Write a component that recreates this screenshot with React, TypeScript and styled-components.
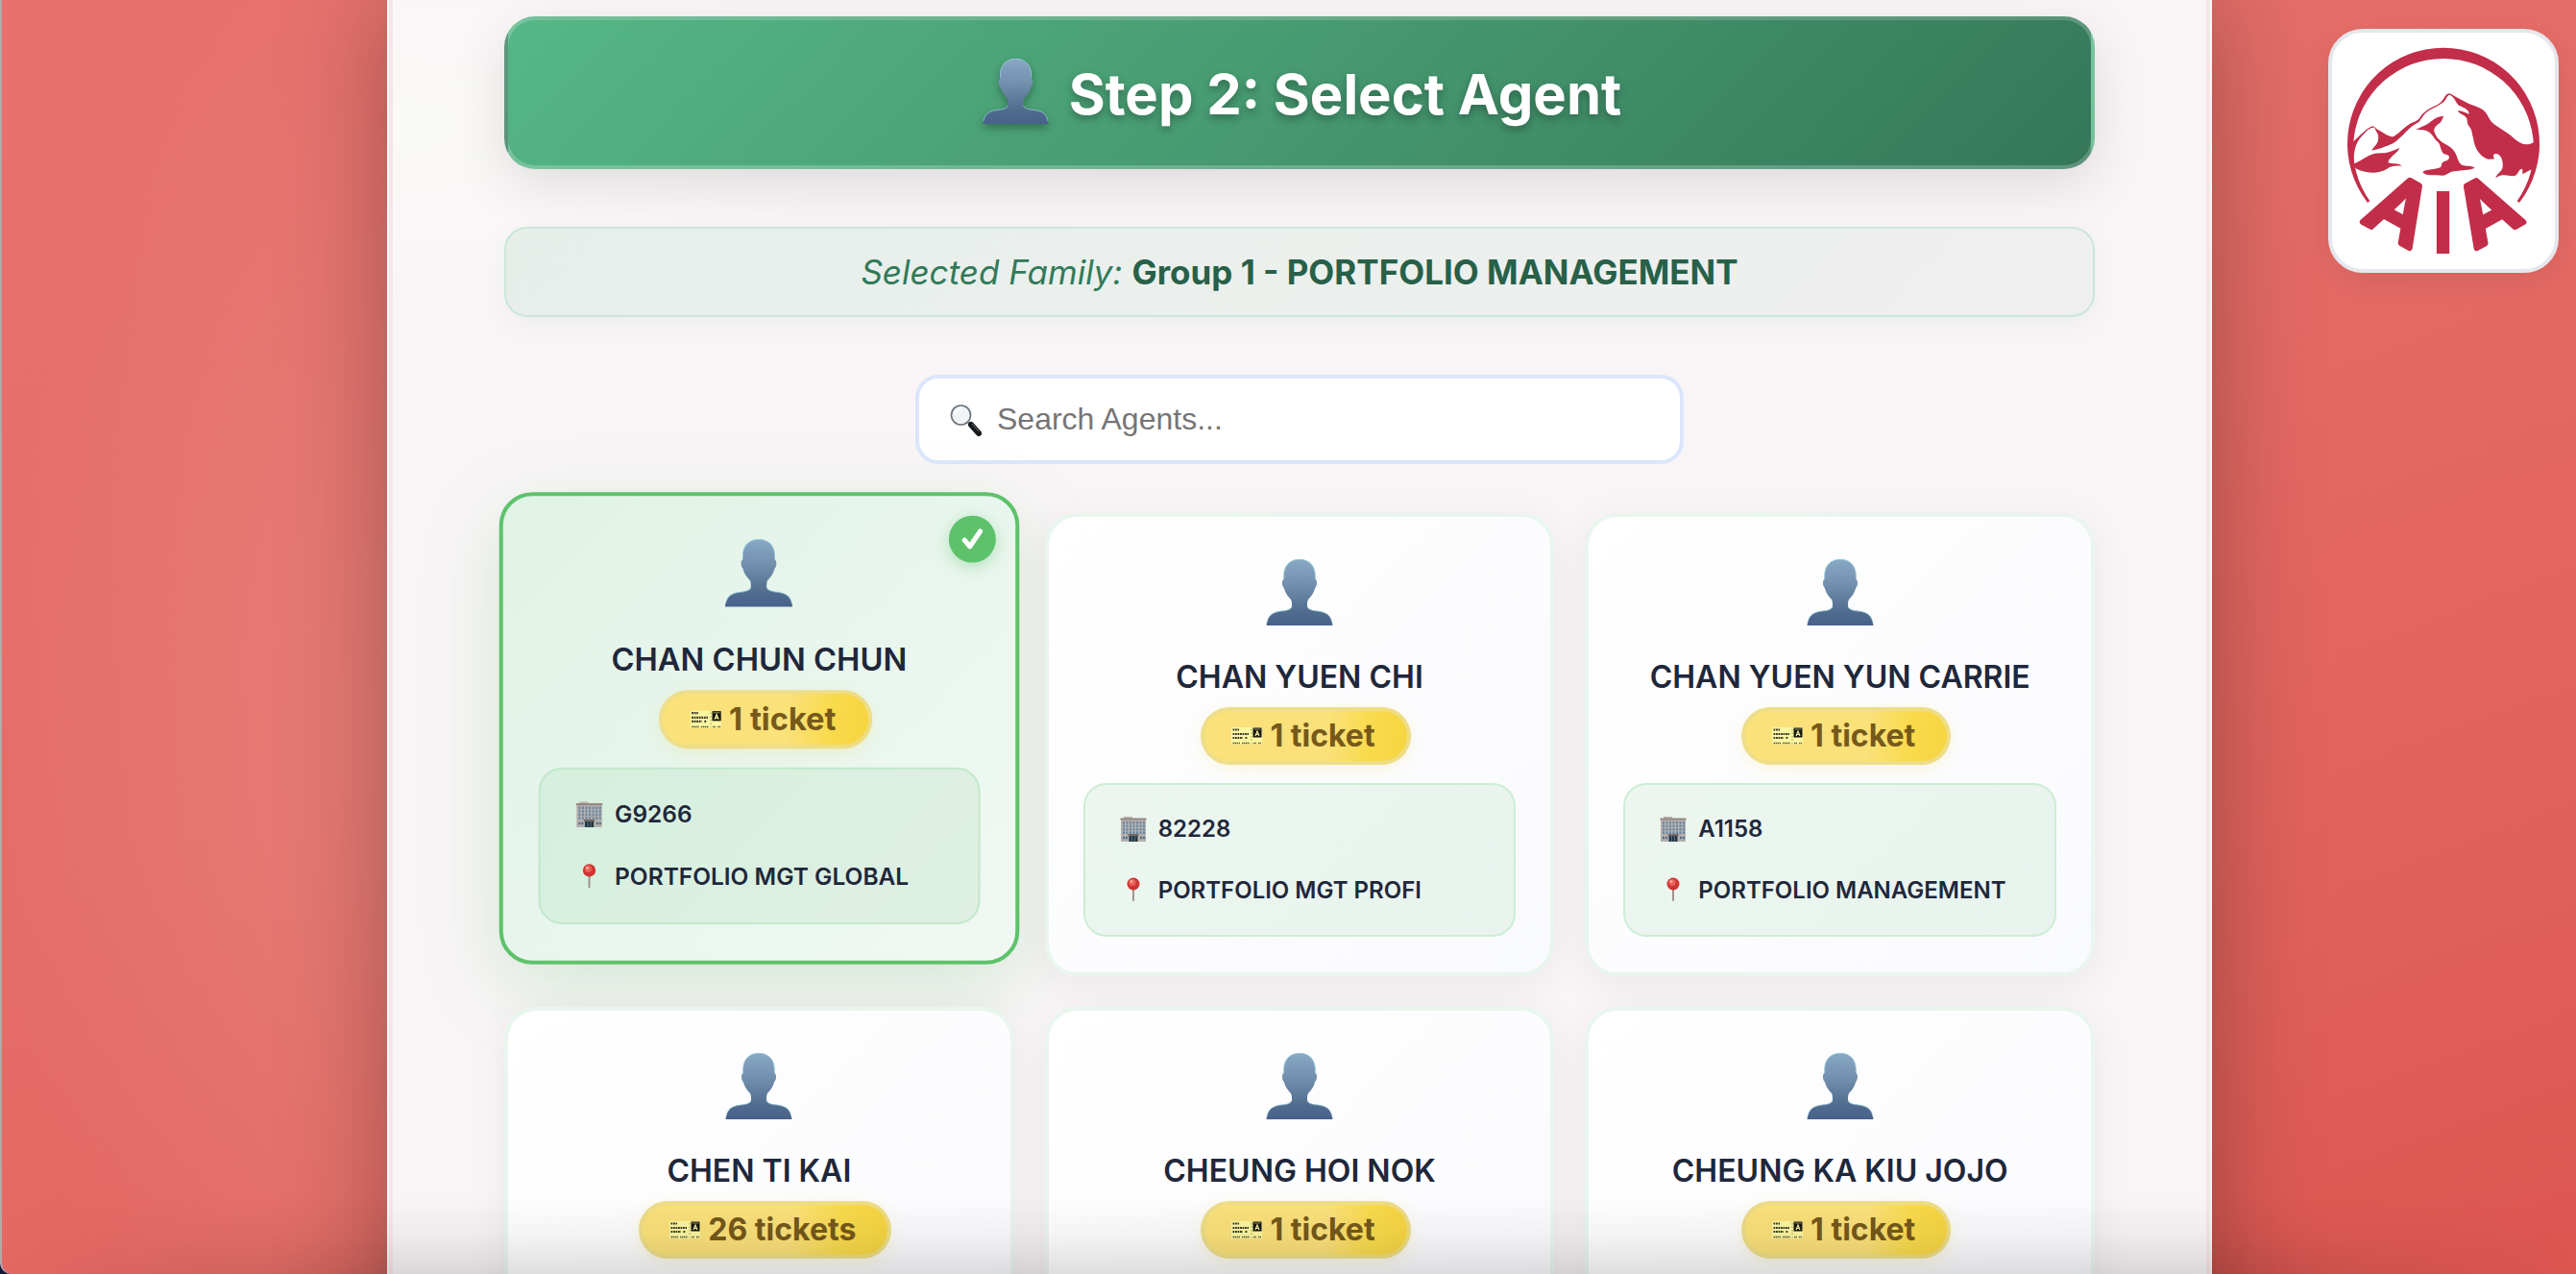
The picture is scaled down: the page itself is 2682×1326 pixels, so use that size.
import React, { useState } from "react";
import styled, { createGlobalStyle, css } from "styled-components";

const GlobalStyle = createGlobalStyle`
  * { box-sizing: border-box; }
  body {
    margin: 0;
    background: #14183a;
    font-family: Inter, "Liberation Sans", sans-serif;
    color: #1f273a;
  }
  button { font: inherit; color: inherit; }
`;

const Page = styled.div`
  height: 100vh;
  overflow: hidden;
  display: flex;
  justify-content: center;
  align-items: flex-start;
  padding-left: 22px;
  border-left: 2px solid #b3a9a9;
  border-bottom-left-radius: 12px;
  background:
    radial-gradient(ellipse 440px 900px at 440px 780px, rgba(232, 136, 130, 0.6), transparent),
    linear-gradient(160deg, #e8716d 0%, #e56d68 42%, #e46862 58%, #df6059 82%, #dc5650 100%);
`;

const BottomShade = styled.div`
  position: fixed;
  left: 0;
  right: 0;
  bottom: 0;
  height: 80px;
  pointer-events: none;
  background: linear-gradient(90deg, transparent 0, #000 400px, #000 calc(100% - 400px), transparent 100%);
  mask-image: linear-gradient(to bottom, transparent, rgba(0, 0, 0, 0.04) 50%, rgba(0, 0, 0, 0.12));
`;

const LogoCard = styled.a`
  position: fixed;
  top: 30px;
  right: 18px;
  width: 240px;
  height: 254px;
  border: 4px solid #e5e7ec;
  border-radius: 36px;
  background: #fff;
  box-shadow: 0 8px 32px rgba(0, 0, 0, 0.08);

  svg { display: block; width: 100%; height: 100%; overflow: visible; }
`;

const Panel = styled.main`
  width: 100%;
  max-width: 1900px;
  min-height: 100vh;
  padding: 17px 120px 0;
  display: flex;
  flex-direction: column;
  border: 0 solid #fdf7f7;
  border-width: 0 2px;
  background:
    radial-gradient(ellipse 500px 200px at 0 130px, rgba(250, 250, 247, 0.9), transparent),
    #f9f5f7;
  box-shadow: inset 4px 0 0 #f7e6e8, inset -4px 0 0 #f7e6e8, 0 0 100px rgba(40, 20, 20, 0.36);
`;

const Banner = styled.h1`
  margin: 0 0 60px;
  padding: 40px;
  display: flex;
  justify-content: center;
  align-items: center;
  gap: 16px;
  border: 4px solid rgba(255, 255, 255, 0.2);
  border-radius: 32px;
  background: linear-gradient(135deg, #55b786 0%, #469970 50%, #357759 100%);
  box-shadow: 0 16px 56px rgba(0, 0, 0, 0.11);
  color: #fff;
  font-size: 58px;
  font-weight: 700;
  line-height: 71px;
  text-shadow: 0 4px 8px rgba(0, 0, 0, 0.3);

  svg { filter: drop-shadow(0 4px 4px rgba(0, 0, 0, 0.3)); margin: -12px 0 -4px; }
  span { padding-top: 2px; margin-bottom: -2px; }
`;

const Family = styled.p`
  margin: 0 0 60px;
  padding: 24px;
  border: 2px solid #cbe6da;
  border-radius: 24px;
  background: linear-gradient(135deg, #e7eeea, #ebf0ed 50%, #efefef);
  box-shadow: 0 8px 24px rgba(56, 120, 90, 0.06);
  color: #317a5a;
  font-size: 35px;
  font-style: italic;
  line-height: 42px;
  text-align: center;

  strong { color: #286048; font-style: normal; font-weight: 700; }
`;

const SearchBox = styled.label`
  align-self: center;
  width: 100%;
  max-width: 800px;
  margin-bottom: 51px;
  padding: 24px 32px;
  display: flex;
  align-items: center;
  gap: 16px;
  border: 4px solid #dbe6fc;
  border-radius: 24px;
  background: #fff;

  input {
    flex: 1;
    min-width: 0;
    padding: 0;
    border: 0;
    outline: 0;
    background: transparent;
    font-family: "Liberation Sans", Arial, sans-serif;
    font-size: 32px;
    line-height: 37px;
    height: 37px;
    color: #1f273a;
  }
  input::placeholder { color: #757575; opacity: 1; }
`;

const Grid = styled.div`
  display: grid;
  grid-template-columns: repeat(3, minmax(0, 1fr));
  gap: 32px;
`;

const AgentName = styled.span`
  margin: 31px 0 11px;
  font-size: 32px;
  font-weight: 600;
  line-height: 40px;
  white-space: nowrap;
`;

const Info = styled.span`
  align-self: stretch;
  height: 160px;
  margin-top: 19px;
  padding: 26px 36px;
  display: flex;
  flex-direction: column;
  gap: 24px;
  border: 2px solid #cdedd4;
  border-radius: 24px;
  background: rgba(92, 190, 110, 0.1);
`;

const Card = styled.button<{ $selected: boolean }>`
  position: relative;
  min-height: 482px;
  padding: 36px;
  display: flex;
  flex-direction: column;
  align-items: center;
  justify-content: flex-start;
  border: 4px solid #e9f6ee;
  border-radius: 34px;
  background: linear-gradient(135deg, #ffffff, #f9fafd);
  box-shadow: 0 8px 40px rgba(0, 0, 0, 0.06);
  cursor: pointer;

  ${(p) =>
    p.$selected &&
    css`
      transform: translateY(-17px) scale(1.02);
      border-color: #5ec26b;
      background: linear-gradient(135deg, #e0f3e6, #e9f6ee 55%, #f1f8f4);
      box-shadow: 0 24px 80px rgba(72, 180, 90, 0.2);

      ${Info} { background: rgba(92, 194, 120, 0.11); border-color: #c3e8cb; }
    `}
`;

const Badge = styled.span`
  position: absolute;
  top: 20px;
  right: 20px;
  width: 48px;
  height: 48px;
  display: grid;
  place-items: center;
  border-radius: 50%;
  background: #5ec26b;
  box-shadow: 0 4px 16px rgba(94, 194, 107, 0.4);
`;

const Tickets = styled.span`
  height: 60px;
  margin-left: 13px;
  padding: 0 33px 0 28px;
  display: flex;
  align-items: center;
  gap: 8px;
  border: 4px solid rgba(236, 222, 140, 0.9);
  border-radius: 30px;
  background: linear-gradient(95deg, #fae17a 0%, #fae17a 60%, #f9da4c 80%, #f6d440 100%) border-box;
  box-shadow: 0 4px 16px rgba(246, 213, 64, 0.18);
  color: #76591a;
  font-size: 32px;
  font-weight: 700;
  line-height: 40px;
  white-space: nowrap;
`;

const InfoRow = styled.span`
  height: 40px;
  display: flex;
  align-items: center;
  gap: 12px;
  font-size: 24px;
  font-weight: 600;
  line-height: 40px;
  white-space: nowrap;
`;

function Person({ size }: { size: number }) {
  return (
    <svg width={size} height={size} viewBox="0 0 80 80" aria-hidden="true">
      <defs>
        <linearGradient id="bust" x1="0" y1="0" x2="0" y2="1">
          <stop offset="0" stopColor="#88a8c4" />
          <stop offset="0.35" stopColor="#7592b0" />
          <stop offset="0.8" stopColor="#506b8d" />
          <stop offset="1" stopColor="#48618a" />
        </linearGradient>
      </defs>
      <path
        d="M40 8C30 8 23.500 15 23.500 25V29C21.200 30 21.600 36 23.800 38C25 43 28 47 31 50C32 52 32 54 32 57C31 60 28 61 24 61.500C12 62.500 7 66 5.500 77H74.500C73 66 68 62.500 56 61.500C52 61 49 60 48 57C48 54 48 52 49 50C52 47 55 43 56.200 38C58.400 36 58.800 30 56.500 29V25C56.500 15 50 8 40 8Z"
        fill="url(#bust)"
      />
      <path
        d="M23.800 28V24.500C23.800 15 30 8.300 40 8.300S56.200 15 56.200 24.500V28M6 74C8 65 13 62.800 24 61.800C28 61.300 31 60 32 57.500M74 74C72 65 67 62.800 56 61.800C52 61.300 49 60 48 57.500"
        fill="none"
        stroke="#98d0e0"
        strokeOpacity="0.75"
      />
    </svg>
  );
}

function Magnifier() {
  return (
    <svg width="33" height="34" viewBox="0 0 33 34" aria-hidden="true">
      <circle cx="11.500" cy="12" r="10" fill="#f0f4f5" stroke="#66717b" strokeWidth="1.600" />
      <path d="M5 12a7 7 0 0 1 6-7" fill="none" stroke="#fff" strokeWidth="2" />
      <path d="M18.500 19l4 4" stroke="#8c949c" strokeWidth="2.500" />
      <path d="M22 22l8 9" stroke="#17191d" strokeWidth="6" strokeLinecap="round" />
      <path d="M23 21l7 8" stroke="#69717a" strokeWidth="1" />
    </svg>
  );
}

function Ticket() {
  return (
    <svg width="32" height="20" viewBox="0 0 32 20" aria-hidden="true">
      <path d="M0 1H20L21 2L22 1H32V19H22L21 18L20 19H0Z" fill="#fbf6a0" />
      <path d="M21 3V18" stroke="#8b8448" strokeWidth="0.800" strokeDasharray="1.500 2" />
      <path d="M1.500 3.500H8M1.500 8H18M1.500 12H12M14.500 12H17" stroke="#38382a" strokeWidth="2.200" strokeDasharray="1.800 0.700" />
      <path d="M1.500 17.500H9M11 17.500H19M23 17.500H26M28 17.500H31" stroke="#5b5a3c" strokeWidth="1.400" strokeDasharray="1.500 0.500" />
      <rect x="22.500" y="1.500" width="9" height="10" fill="#17170f" />
      <path d="M23.500 3H30.500" stroke="#8d8a58" />
      <path d="M25 10L27 5L29 10M25.500 8.500H28.500" fill="none" stroke="#f5f0a0" strokeWidth="1.200" />
    </svg>
  );
}

function Building() {
  return (
    <svg width="28" height="28" viewBox="0 0 28 28" aria-hidden="true">
      <rect x="4" y="1" width="9" height="3" fill="#b9b2ae" />
      <rect x="1" y="3" width="26" height="24" fill="#b4b0ae" />
      <rect x="0.500" y="2.500" width="27" height="2" fill="#958783" />
      <path d="M4 6V20M7.500 6V20M11 6V20M14.500 6V20M18 6V20M21.500 6V20M25 6V20" stroke="#6788a3" strokeWidth="2" strokeDasharray="2.500 1" />
      <path d="M3 23H8M21 23H26" stroke="#526c82" strokeWidth="2.500" strokeDasharray="2 1" />
      <rect x="8.500" y="19" width="11" height="2" fill="#756864" />
      <rect x="9.500" y="21" width="9" height="6" fill="#243745" />
      <path d="M12.500 21V27M15.500 21V27" stroke="#718690" strokeWidth="0.700" />
    </svg>
  );
}

function Pin() {
  return (
    <svg width="28" height="28" viewBox="0 0 28 28" aria-hidden="true">
      <path d="M14 12V24" stroke="#a0968f" strokeWidth="2" strokeLinecap="round" />
      <circle cx="14" cy="7" r="6.500" fill="#cf3434" />
      <circle cx="13" cy="5.500" r="3.600" fill="#e96059" />
      <circle cx="12" cy="4.500" r="1.500" fill="#f9a69c" />
    </svg>
  );
}

function Logo() {
  return (
    <svg viewBox="84 102 696 738" fill="#c22d49" aria-hidden="true">
      <path d="M195 633A300 300 0 1 1 669 633L662 628A282 282 0 1 0 202 628Z" />
      <path d="M148 444C170 427 188 402 210 394C216 393 219 401 226 404C245 414 258 426 276 427C297 413 310 397 330 385C340 380 350 379 357 370C366 352 381 343 400 333C421 325 429 314 436 302C442 293 447 289 455 293C470 302 484 310 500 318C518 328 540 332 555 343C572 355 574 379 593 390C616 406 638 418 655 434C673 449 692 458 715 443L732 450C731 475 728 502 712 528C702 530 693 537 680 543C677 538 681 528 677 527C665 529 665 547 654 549C637 552 620 539 595 555C598 541 614 538 617 521C619 500 611 480 595 480C586 482 587 486 591 497C576 494 572 501 562 493C539 480 529 457 525 431C520 414 522 403 509 391C504 375 509 369 496 361C490 356 481 354 476 346C489 343 501 353 512 356C513 343 497 337 482 330C468 321 472 307 452 296C443 295 442 312 429 321C410 335 393 339 376 353C364 365 361 378 350 384C326 396 311 418 290 436C274 452 256 454 240 462C227 465 219 468 208 470C213 457 226 452 228 437C232 417 222 414 217 399C205 393 187 414 176 426C157 446 151 477 152 506L137 480Z" />
      <path d="M151 512C169 506 180 495 198 487C220 473 244 482 264 474C276 469 285 467 295 462C289 478 264 488 259 507C275 514 287 507 303 518C284 517 265 518 255 528C231 542 190 544 158 526Z" />
      <path d="M345 404C360 398 375 392 387 384C401 373 415 361 433 363C426 374 427 382 415 388C397 402 403 411 408 422C421 446 443 449 459 464C477 480 474 506 490 515C502 520 517 515 530 524C516 532 488 530 466 535C449 536 444 548 429 548C405 547 376 550 367 538C374 529 398 530 415 525C432 522 421 511 431 506C441 501 450 501 450 490C448 480 437 486 430 477C421 464 424 452 413 442C401 431 397 417 384 411C374 404 363 406 345 404Z" />
      <g
        fontFamily="Inter, sans-serif"
        textAnchor="middle"
        stroke="#c22d49"
        strokeLinejoin="round"
      >
        <text x="0" y="0" fontSize="254" fontWeight="500" strokeWidth="18" transform="translate(253 734) rotate(29)">A</text>
        <text x="431" y="792" fontSize="268" fontWeight="700" strokeWidth="0">I</text>
        <text x="0" y="0" fontSize="254" fontWeight="500" strokeWidth="18" transform="translate(609 734) rotate(-29)">A</text>
      </g>
    </svg>
  );
}

type Agent = { name: string; tickets: string; code?: string; place?: string };

const agents: Agent[] = [
  { name: "CHAN CHUN CHUN", tickets: "1 ticket", code: "G9266", place: "PORTFOLIO MGT GLOBAL" },
  { name: "CHAN YUEN CHI", tickets: "1 ticket", code: "82228", place: "PORTFOLIO MGT PROFI" },
  { name: "CHAN YUEN YUN CARRIE", tickets: "1 ticket", code: "A1158", place: "PORTFOLIO MANAGEMENT" },
  { name: "CHEN TI KAI", tickets: "26 tickets" },
  { name: "CHEUNG HOI NOK", tickets: "1 ticket" },
  { name: "CHEUNG KA KIU JOJO", tickets: "1 ticket" },
];

export default function App() {
  const [selected, setSelected] = useState(0);
  const [query, setQuery] = useState("");
  const shown = agents.filter((a) => a.name.toLowerCase().includes(query.toLowerCase()));

  return (
    <>
      <GlobalStyle />
      <Page>
        <Panel>
          <Banner>
            <Person size={79} />
            <span>Step 2: Select Agent</span>
          </Banner>
          <Family>
            Selected Family: <strong>Group 1 - PORTFOLIO MANAGEMENT</strong>
          </Family>
          <SearchBox>
            <Magnifier />
            <input
              type="text"
              aria-label="Search Agents"
              placeholder="Search Agents..."
              value={query}
              onChange={(e) => setQuery(e.target.value)}
            />
          </SearchBox>
          <Grid>
            {shown.map((agent) => {
              const index = agents.indexOf(agent);
              const isSelected = index === selected;
              return (
                <Card
                  key={agent.name}
                  type="button"
                  $selected={isSelected}
                  aria-pressed={isSelected}
                  onClick={() => setSelected(index)}
                >
                  {isSelected && (
                    <Badge>
                      <svg width="24" height="24" viewBox="0 0 24 24" aria-hidden="true">
                        <path d="M4 13L9.500 19.500L20 4" fill="none" stroke="#fff" strokeWidth="5" strokeLinecap="round" strokeLinejoin="round" />
                      </svg>
                    </Badge>
                  )}
                  <Person size={80} />
                  <AgentName>{agent.name}</AgentName>
                  <Tickets>
                    <Ticket />
                    {agent.tickets}
                  </Tickets>
                  {agent.code && (
                    <Info>
                      <InfoRow>
                        <Building />
                        {agent.code}
                      </InfoRow>
                      <InfoRow>
                        <Pin />
                        {agent.place}
                      </InfoRow>
                    </Info>
                  )}
                </Card>
              );
            })}
          </Grid>
        </Panel>
      </Page>
      <LogoCard href="#" aria-label="AIA">
        <Logo />
      </LogoCard>
      <BottomShade />
    </>
  );
}
